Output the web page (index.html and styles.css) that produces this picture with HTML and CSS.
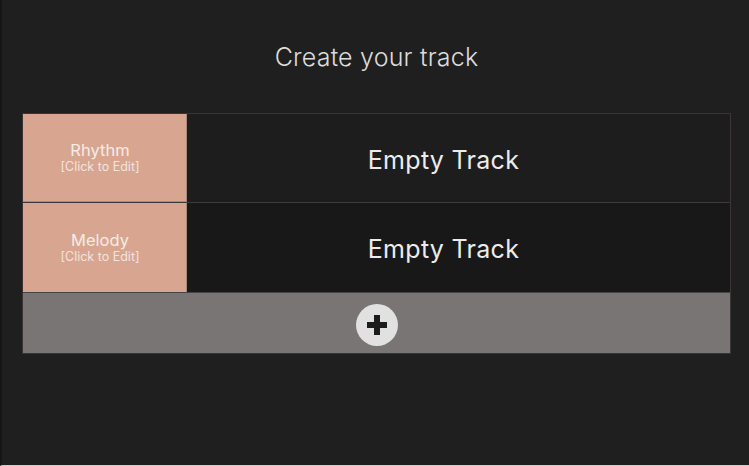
FILE: index.html
```html
<!DOCTYPE html>
<html>
<head>
<meta charset="utf-8">
<link rel="stylesheet" href="styles.css">
</head>
<body>
<div class="page">
  <h1 class="title">Create your track</h1>
  <div class="tracks">
    <div class="track track-first">
      <div class="label">
        <span class="name">Rhythm</span>
        <span class="hint">[Click to Edit]</span>
      </div>
      <div class="content">Empty Track</div>
    </div>
    <div class="track track-second">
      <div class="label">
        <span class="name">Melody</span>
        <span class="hint">[Click to Edit]</span>
      </div>
      <div class="content">Empty Track</div>
    </div>
    <div class="add-bar">
      <button class="add-btn" aria-label="Add track">
        <svg width="22" height="22" viewBox="0 0 22 22"><path d="M8 1h6v7h7v6h-7v7H8v-7H1V8h7z" fill="#1c1c1c"/></svg>
      </button>
    </div>
  </div>
</div>
</body>
</html>
```
FILE: styles.css
```css
html, body {
  margin: 0;
  padding: 0;
  height: 100%;
}
body {
  background: #1f1f1f;
  font-family: Inter, "Noto Sans", sans-serif;
  color: #e6e6e6;
}
.page {
  box-sizing: border-box;
  height: 466px;
  border-left: 2px solid #161616;
  border-bottom: 1px solid #cfcfcf;
  padding: 0 18px 0 20px;
  overflow: hidden;
}
.title {
  margin: 0;
  padding-top: 41px;
  height: 113px;
  box-sizing: border-box;
  text-align: center;
  font-size: 25px;
  font-weight: 300;
  color: #dcdcdc;
  letter-spacing: 0.2px;
  line-height: 32px;
}
.tracks {
  border: 1px solid #3a3333;
  border-right-color: #3e3538;
  display: flex;
  flex-direction: column;
}
.track {
  display: flex;
  height: 89px;
}
.track-first {
  border-bottom: 1px solid #3b3939;
  height: 88px;
}
.track-first .content { background: #1e1d1e; }
.track-second .content { background: #181818; }
.label {
  width: 164px;
  flex: none;
  box-sizing: border-box;
  padding-right: 9px;
  background: #d8a690;
  border-right: 1px solid #a88a7d;
  display: flex;
  flex-direction: column;
  align-items: center;
  justify-content: center;
  gap: 1px;
  color: #f6ebe6;
}
.track-first .label { border-bottom: 1px solid #a8897c; }
.name {
  font-size: 16.5px;
  line-height: 18px;
}
.hint {
  font-size: 12.5px;
  line-height: 14px;
  color: #f3e3dc;
}
.content {
  flex: 1;
  display: flex;
  align-items: center;
  justify-content: center;
  font-size: 25px;
  font-weight: 400;
  color: #ececec;
  letter-spacing: 0.3px;
  padding-top: 3px;
  padding-right: 30px;
}
.add-bar {
  height: 60px;
  background: #787574;
  display: flex;
  align-items: center;
  justify-content: center;
  border-top: 1px solid #444;
}
.add-btn {
  width: 42px;
  height: 42px;
  border-radius: 50%;
  border: none;
  background: #e1e1e1;
  padding: 0;
  display: flex;
  align-items: center;
  justify-content: center;
  margin-top: 3px;
}
```
